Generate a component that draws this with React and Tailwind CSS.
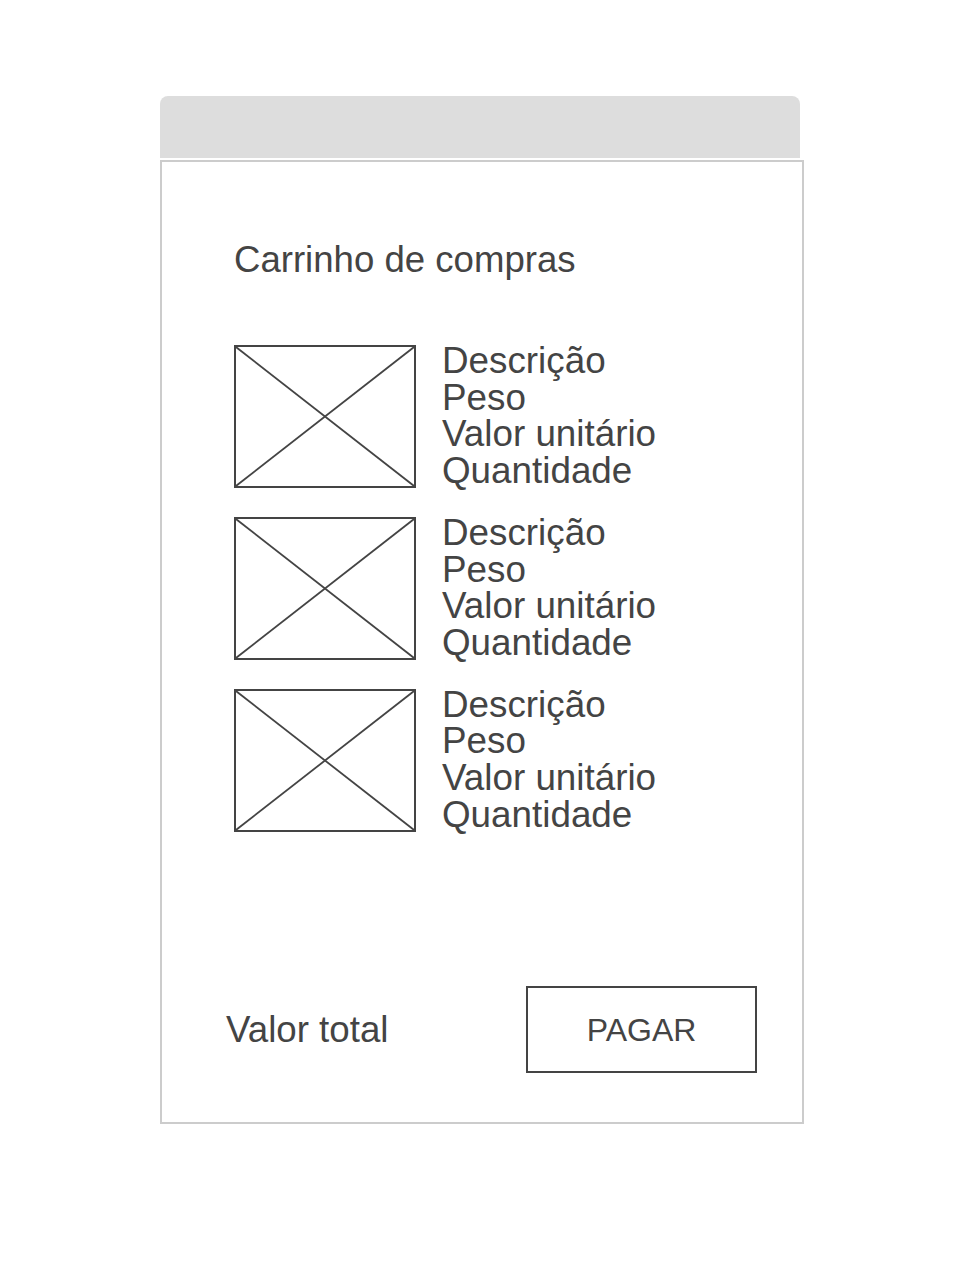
import React from "react";

const items = [1, 2, 3];

function Placeholder() {
  return (
    <div className="w-[182px] h-[143px] border-2 border-[#444444] shrink-0">
      <svg width="100%" height="100%" viewBox="0 0 178 139" preserveAspectRatio="none">
        <line x1="0" y1="0" x2="178" y2="139" stroke="#444444" strokeWidth="1.8" />
        <line x1="178" y1="0" x2="0" y2="139" stroke="#444444" strokeWidth="1.8" />
      </svg>
    </div>
  );
}

export default function App() {
  return (
    <div className="min-h-screen bg-white text-[#444444] font-['Liberation_Sans',Arial,sans-serif]">
      <div className="pt-[96px] pl-[160px]">
        {/* HEADER BAR */}
        <div className="w-[640px] h-[62px] bg-[#dddddd] rounded-t-[8px]" />

        {/* CART BODY */}
        <div className="mt-[2px] w-[644px] h-[964px] border-2 border-[#cccccc] flex flex-col">
          <h1 className="pl-[72px] pt-[80px] text-[36.6px] leading-[36px] font-normal">
            Carrinho de compras
          </h1>

          <div className="mt-[65px] pl-[72px] flex flex-col gap-[25px]">
            {items.map((i) => (
              <div key={i} className="flex items-center gap-[26px]">
                <Placeholder />
                <div className="text-[36.8px] leading-[36.7px]">
                  <div>Descrição</div>
                  <div>Peso</div>
                  <div>Valor unitário</div>
                  <div>Quantidade</div>
                </div>
              </div>
            ))}
          </div>

          {/* FOOTER */}
          <div className="mt-auto pl-[64px] pr-[45px] pb-[49px] flex justify-between items-center">
            <span className="text-[36.7px] leading-[36px]">Valor total</span>
            <button className="w-[231px] h-[87px] border-2 border-[#444444] text-[32px] flex items-center justify-center">
              PAGAR
            </button>
          </div>
        </div>
      </div>
    </div>
  );
}
